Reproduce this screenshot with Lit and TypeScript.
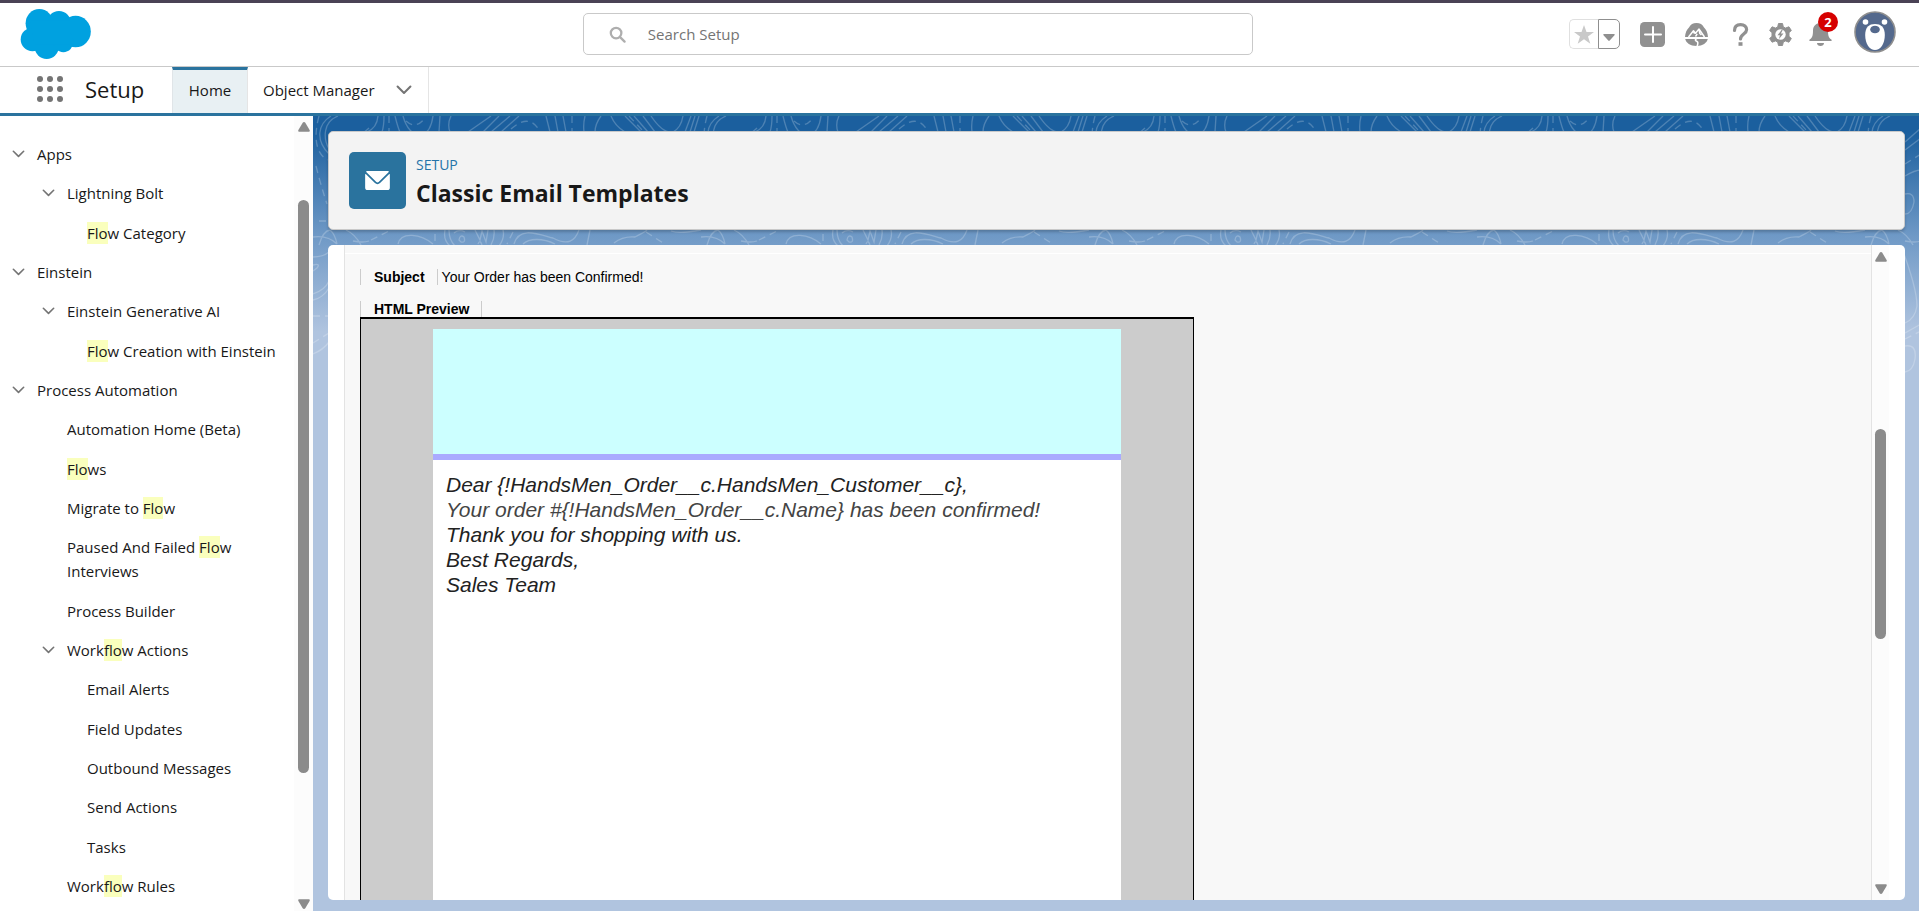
import { LitElement, html, css, svg, unsafeCSS } from "lit";
import { customElement } from "lit/decorators.js";
import { classMap } from "lit/directives/class-map.js";

interface TreeRow {
  level: 1 | 2 | 3;
  label: string;
  branch?: boolean;
}

const TREE: TreeRow[] = [
  { level: 1, label: "Apps", branch: true },
  { level: 2, label: "Lightning Bolt", branch: true },
  { level: 3, label: "Flow Category" },
  { level: 1, label: "Einstein", branch: true },
  { level: 2, label: "Einstein Generative AI", branch: true },
  { level: 3, label: "Flow Creation with Einstein" },
  { level: 1, label: "Process Automation", branch: true },
  { level: 2, label: "Automation Home (Beta)" },
  { level: 2, label: "Flows" },
  { level: 2, label: "Migrate to Flow" },
  { level: 2, label: "Paused And Failed Flow Interviews" },
  { level: 2, label: "Process Builder" },
  { level: 2, label: "Workflow Actions", branch: true },
  { level: 3, label: "Email Alerts" },
  { level: 3, label: "Field Updates" },
  { level: 3, label: "Outbound Messages" },
  { level: 3, label: "Send Actions" },
  { level: 3, label: "Tasks" },
  { level: 2, label: "Workflow Rules" },
];

/* Contour-line tile that repeats across the blue page backdrop. */
const SOLID = [
  "M25 0C10 6 10 22 16 33", "M18 0C5 8 2 24 16 38",
  "M65 0Q64 12 54 16", "M71 0Q71 10 69 16", "M82 0Q85 12 87 16",
  "M90 0Q95 18 108 20Q118 16 120 0", "M127 0L126 16", "M138 0Q134 8 137 16",
  "M178 0L155 16", "M186 0L170 16", "M197 0L178 16", "M206 0L188 16",
  "M233 0L237 16", "M242 0L245 16", "M250 0L253 16", "M272 0Q270 8 271 16",
  "M288 0Q282 8 282 16", "M298 0Q302 10 312 16", "M312 0L328 16",
  "M321 0L335 16", "M330 0L342 16", "M338 0Q350 18 360 16Q368 12 370 0",
  "M378 0L372 16", "M382 0L377 16", "M386 0L381 16",
  "M0 121Q15 119 24 128", "M6 129Q10 115 17 114Q22 118 24 128",
  "M33 114Q42 118 48 129", "M85 128C88 115 108 118 120 128",
  "M132 114Q130 124 137 130", "M136 114q0 10 6 16",
  "M146 124q1 -6 5 -3q2 6 -3 5z", "M141 117Q146 113 152 116",
  "M162 114l5 10l2 -9l4 11l2 -12", "M165 128q2 -5 4 1",
  "M181 114Q182 122 178 129", "M190 114q2 8 -4 16",
  "M201 128C206 110 225 118 240 122C255 130 262 125 266 114",
  "M210 128C216 122 230 122 242 128", "M277 114L274 129",
  "M301 127Q310 120 322 121Q332 116 334 114", "M358 115Q366 118 388 114",
  "M0 141Q10 141 16 136", "M0 149Q8 147 4 152L0 155",
  "M0 178Q12 174 16 165", "M0 184Q10 182 16 172", "M0 238Q10 234 16 226",
  "M40 26L56 12", "M40 34L56 22", "M40 60Q50 54 56 54",
  "M40 78Q49 76 49 86Q47 98 40 98", "M40 125Q50 127 56 125",
  "M36 130Q52 172 52 190Q50 203 40 207", "M40 217L56 208",
  "M40 230Q52 228 50 243Q48 255 40 256",
];
const DASHED = [
  "M6 0C-2 30 8 42 16 44", "M3 50Q8 70 14 88", "M6 105H16", "M76 0V16",
  "M93 5Q103 14 112 2", "M198 13Q216 -3 226 14", "M259 0V16", "M316 0L331 16",
  "M58 124L78 114", "M122 118V126", "M200 116L194 128", "M333 116L350 127",
  "M0 200H16", "M0 227Q8 222 16 217", "M40 48L56 38", "M40 223L56 215",
];
const tile =
  `<svg xmlns="http://www.w3.org/2000/svg" width="388" height="260" fill="none" stroke="white" stroke-opacity=".22" stroke-width="1.3">` +
  `<path d="${SOLID.join("")}"/><path stroke-dasharray="7 5" d="${DASHED.join("")}"/></svg>`;
const tileUrl = unsafeCSS(`url("data:image/svg+xml,${encodeURIComponent(tile)}")`);

const chevron = svg`<svg class="chevron" viewBox="0 0 14 9" aria-hidden="true"><path d="M1.2 1.4 7 7.2l5.800-5.800" fill="none" stroke="#747474" stroke-width="1.800" stroke-linecap="round" stroke-linejoin="round"/></svg>`;

const arrowUp = svg`<svg class="arrow" viewBox="0 0 12 10" aria-hidden="true"><path d="M6 0c.6 0 1 .3 1.300.8L11.600 8c.5 1 0 1.800-1 1.800H1.400c-1 0-1.500-.8-1-1.800L4.700.8C5 .3 5.400 0 6 0z" fill="#8b8b8b"/></svg>`;
const arrowDown = svg`<svg class="arrow" viewBox="0 0 12 10" aria-hidden="true"><path d="M6 10c.6 0 1-.3 1.300-.8L11.600 2c.5-1 0-1.800-1-1.800H1.400C.4.2-.1 1 .4 2l4.300 7.200c.3.500.7.800 1.300.8z" fill="#8b8b8b"/></svg>`;

@customElement("setup-header")
class SetupHeader extends LitElement {
  static styles = css`
    :host { display: block; font-family: "Open Sans", "Noto Sans", sans-serif; }
    .bar {
      display: grid;
      grid-template-columns: minmax(0, 7fr) minmax(0, 670px) minmax(0, 8fr);
      align-items: start;
      height: 67px;
      box-sizing: border-box;
      border-top: 3px solid #4a4255;
      border-bottom: 1px solid #c9c9c9;
      background: #fff;
    }
    .logo { display: block; width: 72px; height: 50px; margin: 6px 0 0 20px; }
    .search {
      display: flex;
      align-items: center;
      gap: 22px;
      height: 42px;
      margin-top: 10px;
      padding: 0 25px;
      box-sizing: border-box;
      border: 1px solid #c9c9c9;
      border-radius: 5px;
    }
    .search svg { flex: none; width: 17px; height: 17px; }
    .search input {
      flex: 1;
      min-width: 0;
      border: 0;
      padding: 0;
      outline: 0;
      background: none;
      font: 15px/24px "Open Sans", "Noto Sans", sans-serif;
      color: #181818;
    }
    .search input::placeholder { color: #747474; opacity: 1; }
    .actions {
      display: flex;
      justify-content: flex-end;
      align-items: center;
      gap: 4px;
      height: 42px;
      margin-top: 10px;
      padding-right: 23px;
    }
    button { border: 0; padding: 0; background: none; font: inherit; cursor: pointer; }
    .icon { display: grid; place-items: center; position: relative; width: 40px; height: 40px; }
    .icon svg { width: 25px; height: 25px; }
    .group { display: flex; margin-right: 10px; }
    .fav { display: flex; margin-right: 8px; }
    .fav button {
      display: grid;
      place-items: center;
      height: 30px;
      box-sizing: border-box;
      border: 1px solid #e0e0e0;
    }
    .fav .star { width: 29px; border-right: 0; border-radius: 5px 0 0 5px; }
    .star svg { width: 20px; height: 19px; }
    .fav .more { width: 22px; border-color: #8f8f8f; border-radius: 0 5px 5px 0; }
    .more svg { width: 12px; height: 7px; margin-top: 6px; }
    .badge {
      position: absolute;
      left: 18px;
      top: -2px;
      width: 20px;
      border-radius: 10px;
      background: #d60000;
      color: #fff;
      font-size: 13px;
      font-weight: 700;
      line-height: 20px;
      text-align: center;
    }
    .avatar { align-self: flex-start; }
    .avatar svg { display: block; width: 42px; height: 42px; margin-top: -2px; }
    .nav {
      display: flex;
      align-items: stretch;
      height: 49px;
      box-sizing: border-box;
      border-bottom: 3px solid #2a739e;
      background: #fff;
      color: #181818;
      font-size: 15px;
    }
    .waffle { display: flex; align-items: center; padding: 0 22px 2px 37px; }
    .waffle svg { width: 26px; height: 26px; }
    .app { margin: 0; width: 87px; font-size: 22px; font-weight: 400; line-height: 45px; }
    .tab {
      display: flex;
      align-items: center;
      box-sizing: border-box;
      color: inherit;
      text-decoration: none;
      border-right: 1px solid #e5e5e5;
    }
    .tab a { color: inherit; text-decoration: none; }
    .home {
      width: 76px;
      justify-content: center;
      padding-bottom: 3px;
      border-left: 1px solid #e0e5e8;
      border-top: 3px solid #2a739e;
      background: #e8f0f3;
    }
    .object { justify-content: space-between; width: 181px; padding: 0 16px 0 15px; }
    .chevron { display: block; width: 16px; height: 10px; }
  `;

  render() {
    return html`
      <header class="bar">
        <svg class="logo" viewBox="0 0 72 51" role="img" aria-label="Salesforce" fill="#00a1e0">
          <ellipse cx="19" cy="14.500" rx="14" ry="14.500" /><ellipse cx="39" cy="15" rx="12.500" ry="13" />
          <ellipse cx="56" cy="23" rx="15.500" ry="16" /><ellipse cx="12" cy="31" rx="12" ry="12" />
          <ellipse cx="26.500" cy="38" rx="12.500" ry="13" /><ellipse cx="43.500" cy="33" rx="10.500" ry="11" />
          <path d="M10 12h40v24H14z" />
        </svg>
        <label class="search">
          <svg viewBox="0 0 18 18" fill="none" stroke="#aeaeae" stroke-width="2.400" stroke-linecap="round" aria-hidden="true">
            <circle cx="7.500" cy="7.500" r="5.600" /><path d="m12 12 4.500 4.500" />
          </svg>
          <input type="search" placeholder="Search Setup" aria-label="Search Setup" />
        </label>
        <div class="actions">
          <div class="fav">
            <button class="star" aria-label="Add favorite">
              <svg viewBox="0 0 20 19" fill="#c9c9c9"><path d="m10 0 2.500 7H20l-6 4.400 2.300 7.300L10 14.300l-6.300 4.400L6 11.400 0 7h7.500z" /></svg>
            </button>
            <button class="more" aria-label="View favorites">
              <svg viewBox="0 0 12 7" fill="#8f8f8f"><path d="M1 0h10c.800 0 1 .6.500 1.200L6.700 6.600c-.4.500-1 .5-1.400 0L.5 1.200C0 .6.200 0 1 0z" /></svg>
            </button>
          </div>
          <button class="icon" aria-label="Global actions">
            <svg viewBox="0 0 25 25"><rect width="25" height="25" rx="4.500" fill="#919191" /><path d="M13 5v15M5 12.500h16" stroke="#fff" stroke-width="2" stroke-linecap="round" /></svg>
          </button>
          <button class="icon" aria-label="Guidance center">
            <svg viewBox="0 0 25 25">
              <path d="M12.500 1C16 1 18.500 2.400 20 5.500c2.200 2 3.700 5 4 9.500H1c.3-4.500 1.800-7.500 4-9.500C6.500 2.400 9 1 12.500 1zM1.200 17h22.600c-.8 3.700-5 7-11.300 7s-10.500-3.300-11.300-7z" fill="#919191" />
              <path d="m4.500 15 5-6.300 2 2.500L15 7l5.500 8M9.500 9l1 2.800M11.500 14.500l1.700-2.600M15 7.500l.8 4 1.600 1.500" stroke="#fff" stroke-width="1.400" fill="none" stroke-linejoin="round" />
              <path d="M13.500 16c-2.500 1.500-3 2.500-.5 3.500 1.500.7 1 2.500 0 5" stroke="#fff" stroke-width="1.600" fill="none" />
            </svg>
          </button>
          <div class="group">
            <button class="icon" aria-label="Help">
              <svg viewBox="0 0 25 25" fill="none" stroke="#919191" stroke-width="3.200"><path d="M6.500 8.500C6.500 4.500 9 2.600 12.600 2.600s6 2 6 5.200c0 4.200-6.100 4.400-6.100 9.200" stroke-linecap="round" /><path d="M10.500 22h4" stroke-width="3.600" /></svg>
            </button>
            <button class="icon" aria-label="Setup menu">
              <svg viewBox="0 0 25 25">
                <path d="M10.500 1.500h4l.8 3.400 2.200 1.200 3.400-1.300 2.400 3.600-2.300 2.400v3.400l2.300 2.400-2.400 3.600-3.400-1.300-2.200 1.200-.8 3.400h-4l-.8-3.400-2.200-1.200-3.400 1.300-2.400-3.600L4 14.200v-3.400L1.700 8.400l2.400-3.600 3.400 1.300 2.200-1.200z" fill="#919191" stroke="#919191" stroke-linejoin="round" />
                <circle cx="12.500" cy="12.500" r="5.200" fill="#fff" /><path d="m13.500 8-4 5.300h2.400L11 17l4.500-5.500h-2.600l1.800-3.500z" fill="#919191" />
              </svg>
            </button>
            <button class="icon" aria-label="Notifications">
              <svg viewBox="0 0 25 25" fill="#919191"><path d="M12.500 1c4.500 0 7.500 3.200 7.500 7.500 0 5 .8 7.500 3 8.700 1 .5 1 1.800 0 1.800H2c-1 0-1-1.300 0-1.800 2.200-1.200 3-3.700 3-8.700C5 4.200 8 1 12.500 1zM9 21h7c0 2-1.500 3-3.500 3S9 23 9 21z" /></svg>
              <span class="badge">2</span>
            </button>
          </div>
          <button class="avatar" aria-label="View profile">
            <svg viewBox="0 0 42 42">
              <circle cx="21" cy="21" r="20" fill="#54698d" stroke="#8e8e8e" stroke-width="1.600" />
              <circle cx="11.500" cy="11" r="2.800" fill="#fff" /><circle cx="30.500" cy="11" r="2.800" fill="#fff" />
              <path d="M21 13c6 0 9.800 3.200 9.800 11 0 9-4.500 15-9.800 15s-9.800-6-9.800-15c0-7.800 3.800-11 9.800-11z" fill="#fff" />
              <ellipse cx="21" cy="18.500" rx="4.800" ry="3.800" fill="#54698d" />
            </svg>
          </button>
        </div>
      </header>
      <nav class="nav" aria-label="Setup">
        <button class="waffle" aria-label="App launcher">
          <svg viewBox="0 0 26 26" fill="#747474">
            ${[3, 13, 23].map((y) => [3, 13, 23].map((x) => svg`<circle cx=${x} cy=${y} r="3" />`))}
          </svg>
        </button>
        <h1 class="app">Setup</h1>
        <a class="tab home" href="#home" aria-current="page">Home</a>
        <div class="tab object">
          <a href="#objects">Object Manager</a>
          <button aria-label="Object Manager menu">${chevron}</button>
        </div>
      </nav>
    `;
  }
}

@customElement("setup-tree")
class SetupTree extends LitElement {
  static styles = css`
    :host {
      display: flex;
      min-height: 0;
      overflow: hidden;
      background: #fff;
      color: #181818;
      font: 15px/24px "Open Sans", "Noto Sans", sans-serif;
    }
    .tree { flex: 1; min-width: 0; margin: 0; padding: 19px 8px 0 0; list-style: none; }
    .row { display: flex; padding: 7px 0 8px 37px; }
    .row:nth-child(3n) { margin-top: 1px; }
    .level2 { padding-left: 67px; }
    .level3 { padding-left: 87px; white-space: nowrap; }
    .branch.row { padding-left: 12px; }
    .branch.level2 { padding-left: 42px; }
    a { color: inherit; text-decoration: none; }
    .toggle { display: grid; align-items: center; width: 25px; border: 0; padding: 0; background: none; }
    .chevron { display: block; width: 13px; height: 8px; }
    mark { padding: 1px 0; background: #faffbd; color: inherit; }
    .rail {
      flex: none;
      display: flex;
      flex-direction: column;
      align-items: center;
      gap: 4px;
      width: 19px;
      box-sizing: border-box;
      padding: 6px 0 2px;
      background: #fcfcfc;
    }
    .arrow { flex: none; width: 12px; height: 10px; }
    .track { flex: 1; display: grid; grid-template-rows: 64fr 574fr 122fr; }
    .thumb { grid-row: 2; width: 11px; border-radius: 6px; background: #8b8b8b; }
  `;

  private marked(label: string) {
    return label
      .split(/(flo)/i)
      .map((part) => (/^flo$/i.test(part) ? html`<mark>${part}</mark>` : part));
  }

  render() {
    return html`
      <ul class="tree" role="tree" aria-label="Setup tree">
        ${TREE.map(
          (row) => html`<li
            class=${classMap({ row: true, branch: !!row.branch, level2: row.level === 2, level3: row.level === 3 })}
            role="treeitem"
            aria-level=${row.level}
          >${row.branch ? html`<button class="toggle" aria-label="Collapse ${row.label}">${chevron}</button>` : null}<a href="#node">${this.marked(row.label)}</a></li>`
        )}
      </ul>
      <div class="rail" aria-hidden="true">
        ${arrowUp}
        <div class="track"><div class="thumb"></div></div>
        ${arrowDown}
      </div>
    `;
  }
}

@customElement("email-template")
class EmailTemplate extends LitElement {
  static styles = css`
    :host {
      display: flex;
      min-height: 0;
      box-sizing: border-box;
      padding: 0 16px;
      overflow: hidden;
      border-radius: 5px;
      background: #fff;
      color: #000;
      font: 14px/16px "Liberation Sans", Arial, sans-serif;
    }
    .frame {
      flex: 1;
      min-width: 0;
      display: flex;
      flex-direction: column;
      border: solid #e3e3e3;
      border-width: 0 1px;
      background: #f8f8f8;
    }
    .rule { flex: none; height: 1px; margin-top: 8px; background: #fff; }
    .detail { flex: 1; min-height: 0; display: flex; flex-direction: column; padding: 15px 15px 0; }
    .field { display: flex; margin: 0 0 16px; }
    .name {
      padding: 0 12px 0 13px;
      border: solid #ccc;
      border-width: 0 1px;
      font-weight: 700;
    }
    .value { margin: 0; padding-left: 4px; }
    .title { align-self: flex-start; margin: 0; font-size: 14px; line-height: 16px; }
    .preview {
      flex: 1;
      display: flex;
      justify-content: center;
      width: 834px;
      max-width: 100%;
      box-sizing: border-box;
      padding-top: 10px;
      border: 1px solid #000;
      border-width: 2px 1px 0;
      background: #ccc;
    }
    .letter { width: 688px; background: #fff; }
    .banner { height: 125px; border-bottom: 6px solid #aaf; background: #cff; }
    .body { padding: 12px 13px; font-size: 21px; font-style: italic; line-height: 25px; color: #222; }
    .body p { margin: 0; }
    .body .soft { color: #444; }
    .rail {
      flex: none;
      display: flex;
      flex-direction: column;
      align-items: center;
      gap: 4px;
      width: 17px;
      box-sizing: border-box;
      padding: 7px 0 6px;
      background: #fcfcfc;
    }
    .arrow { flex: none; width: 12px; height: 10px; }
    .track { flex: 1; display: grid; grid-template-rows: 163fr 210fr 241fr; }
    .thumb { grid-row: 2; width: 11px; border-radius: 6px; background: #8b8b8b; }
  `;

  render() {
    return html`
      <div class="frame">
        <div class="rule"></div>
        <div class="detail">
          <div class="field"><span class="name">Subject</span><p class="value">Your Order has been Confirmed!</p></div>
          <h3 class="name title">HTML Preview</h3>
          <div class="preview">
            <div class="letter">
              <div class="banner"></div>
              <div class="body">
                <p>Dear {!HandsMen_Order__c.HandsMen_Customer__c},</p>
                <p class="soft">Your order #{!HandsMen_Order__c.Name} has been confirmed!</p>
                <p>Thank you for shopping with us.</p>
                <p>Best Regards,</p>
                <p>Sales Team</p>
              </div>
            </div>
          </div>
        </div>
      </div>
      <div class="rail" aria-hidden="true">
        ${arrowUp}
        <div class="track"><div class="thumb"></div></div>
        ${arrowDown}
      </div>
    `;
  }
}

@customElement("app-root")
class AppRoot extends LitElement {
  static styles = css`
    :host {
      display: grid;
      grid-template-rows: auto minmax(0, 1fr);
      height: 100vh;
      overflow: hidden;
      font-family: "Open Sans", "Noto Sans", sans-serif;
      color: #181818;
    }
    .layout { display: grid; grid-template-columns: 313px minmax(0, 1fr); min-height: 0; }
    .main {
      display: grid;
      grid-template-rows: auto minmax(0, 1fr);
      gap: 15px;
      min-height: 0;
      box-sizing: border-box;
      padding: 15px 14px 11px 15px;
      background:
        ${tileUrl} 0 0 / 388px 260px repeat-x,
        linear-gradient(#1b5f9e 16px, #6f99c6 120px, #b0c4df 216px);
    }
    .page {
      display: flex;
      align-items: center;
      gap: 10px;
      padding: 20px;
      border: 1px solid #c9c9c9;
      border-radius: 5px;
      background: #f3f3f3;
      box-shadow: 0 2px 3px rgba(0, 0, 0, 0.2);
    }
    .glyph {
      flex: none;
      display: grid;
      place-items: center;
      width: 57px;
      height: 57px;
      border-radius: 5px;
      background: #2a739e;
    }
    .glyph svg { width: 25px; height: 19px; }
    .kicker { margin: 0; font-size: 14px; line-height: 24px; color: #2574a9; }
    .title { margin: 0; font-size: 23px; font-weight: 700; line-height: 32px; }
  `;

  render() {
    return html`
      <setup-header></setup-header>
      <div class="layout">
        <setup-tree></setup-tree>
        <main class="main">
          <div class="page">
            <span class="glyph">
              <svg viewBox="0 0 26 20" fill="#fff" aria-hidden="true">
                <path d="M2 0h22c.8 0 1.200.7.600 1.300L14.200 11.600c-.7.700-1.700.7-2.400 0L1.400 1.300C.8.700 1.200 0 2 0z" />
                <path d="M0 3.600c0-.5.500-.7.900-.3l9.400 9.400c1.600 1.500 3.800 1.500 5.400 0l9.400-9.400c.4-.4.900-.2.900.3V17.500c0 1.400-1 2.500-2.500 2.500h-21C1 20 0 18.900 0 17.500z" />
              </svg>
            </span>
            <div>
              <p class="kicker">SETUP</p>
              <h2 class="title">Classic Email Templates</h2>
            </div>
          </div>
          <email-template></email-template>
        </main>
      </div>
    `;
  }
}
